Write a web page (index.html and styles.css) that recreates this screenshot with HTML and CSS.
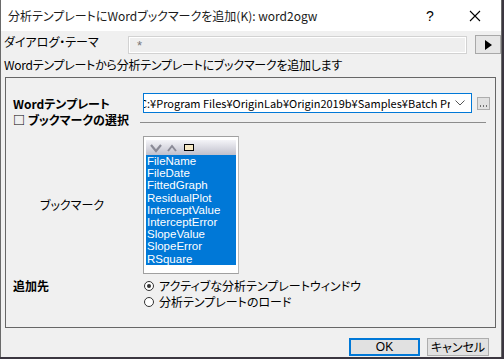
FILE: index.html
```html
<!DOCTYPE html>
<html lang="ja">
<head>
    <meta charset="UTF-8">
    <meta name="viewport" content="width=device-width, initial-scale=1.0">
    <title>分析テンプレートにWordブックマークを追加</title>
    <link rel="stylesheet" href="styles.css">
</head>
<body>
    <div class="dialog">
        <div class="titlebar">
            <span class="title">分析テンプレートにWordブックマークを追加(K): word2ogw</span>
            <span class="help">?</span>
            <span class="close">
                <svg width="12" height="12" viewBox="0 0 12 12"><path d="M1 1 L11 11 M11 1 L1 11" stroke="#000" stroke-width="1.1" fill="none"/></svg>
            </span>
        </div>

        <div class="theme-row">
            <span class="theme-label">ダイアログ・テーマ</span>
            <div class="theme-input">*</div>
            <div class="arrow-btn">
                <svg width="8" height="10" viewBox="0 0 8 10"><path d="M1 0 L8 5 L1 10 Z" fill="#000"/></svg>
            </div>
        </div>

        <div class="desc">Wordテンプレートから分析テンプレートにブックマークを追加します</div>

        <div class="group">
            <div class="row template-row">
                <span class="bold-label">Wordテンプレート</span>
                <div class="combo">
                    <span class="combo-text">C:¥Program Files¥OriginLab¥Origin2019b¥Samples¥Batch Processing</span>
                    <svg class="chevron" width="10" height="6" viewBox="0 0 10 6"><path d="M0.5 0.5 L5 5 L9.5 0.5" stroke="#555" stroke-width="1" fill="none"/></svg>
                </div>
                <div class="dots-btn">
                    <svg width="11" height="11" viewBox="0 0 11 11"><path d="M2 8h1M5 8h1M8 8h1" stroke="#000" stroke-width="1"/></svg>
                </div>
            </div>

            <div class="section-head">
                <span class="section-title">□ ブックマークの選択</span>
            </div>

            <div class="row bookmark-row">
                <span class="plain-label">ブックマーク</span>
                <div class="listbox">
                    <div class="list-head">
                        <svg width="12" height="10" viewBox="0 0 12 10"><path d="M1 2 L6 8 L11 2" stroke="#8a8a96" stroke-width="2.2" fill="none"/></svg>
                        <svg width="12" height="10" viewBox="0 0 12 10"><path d="M2 8 L6 3 L10 8" stroke="#8a8a96" stroke-width="2" fill="none"/></svg>
                        <span class="mini-rect"></span>
                    </div>
                    <ul class="items">
                        <li>FileName</li>
                        <li>FileDate</li>
                        <li>FittedGraph</li>
                        <li>ResidualPlot</li>
                        <li>InterceptValue</li>
                        <li>InterceptError</li>
                        <li>SlopeValue</li>
                        <li>SlopeError</li>
                        <li>RSquare</li>
                    </ul>
                    <div class="list-tail"></div>
                </div>
            </div>

            <div class="row dest-row">
                <span class="bold-label">追加先</span>
                <div class="radios">
                    <div class="radio"><span class="dot checked"></span>アクティブな分析テンプレートウィンドウ</div>
                    <div class="radio"><span class="dot"></span>分析テンプレートのロード</div>
                </div>
            </div>
        </div>

        <div class="footer">
            <div class="btn ok">OK</div>
            <div class="btn">キャンセル</div>
        </div>
    </div>
</body>
</html>
```

FILE: styles.css
```css
body {
    margin: 0;
    background-color: #3b3640;
    font-family: "Noto Sans CJK JP", "Liberation Sans", sans-serif;
    font-size: 12px;
    font-feature-settings: "palt";
    color: #000;
}
.dialog {
    width: 500px;
    height: 357px;
    background-color: #f0f0f0;
    border-left: 1px solid #6a6a6a;
    border-right: 1px solid #6a6a6a;
    display: flex;
    flex-direction: column;
}

/* title bar */
.titlebar {
    height: 31px;
    background-color: #fff;
    display: flex;
    align-items: center;
    padding-left: 7px;
}
.title {
    flex: 1;
    font-size: 12px;
    color: #1a1a1a;
}
.help {
    width: 30px;
    font-family: "Liberation Sans", sans-serif;
    font-size: 14px;
    text-align: center;
    margin-right: 20px;
}
.close {
    width: 20px;
    margin-right: 16px;
    display: flex;
    justify-content: center;
}

/* theme row */
.theme-row {
    display: flex;
    align-items: center;
    height: 22px;
    margin-top: 3px;
    padding-left: 3px;
}
.theme-label {
    width: 124px;
    line-height: 14px;
    margin-top: -6px;
}
.theme-input {
    width: 329px;
    height: 15px;
    border: 1px solid #d2d2d2;
    outline: 1px solid #fff;
    outline-offset: -2px;
    background-color: #eeeeee;
    padding: 1px 0 0 8px;
    color: #777;
    font-family: "Liberation Sans", sans-serif;
    font-size: 13px;
    line-height: 15px;
    margin-top: -1px;
}
.arrow-btn {
    width: 24px;
    height: 17px;
    margin-left: 8px;
    border: 1px solid #a8a8a8;
    background-color: #e6e6e6;
    display: flex;
    align-items: center;
    justify-content: center;
    margin-top: -1px;
}

.desc {
    padding-left: 3px;
    height: 19px;
    line-height: 18px;
    letter-spacing: -0.25px;
}

/* group box */
.group {
    margin: 2px 0 0 4px;
    width: 491px;
    height: 251px;
    border: 1px solid #666;
    box-sizing: border-box;
    padding: 14px 0 0 7px;
}
.row {
    display: flex;
}
.bold-label {
    font-weight: bold;
}
.template-row {
    align-items: center;
    height: 22px;
}
.template-row .bold-label {
    width: 130px;
}
.combo {
    width: 327px;
    height: 18px;
    border: 1px solid #0078d7;
    background-color: #fff;
    display: flex;
    align-items: center;
    overflow: hidden;
}
.combo-text {
    flex: 1;
    white-space: nowrap;
    overflow: hidden;
    font-size: 11px;
    text-indent: -4px;
}
.chevron {
    margin: 0 6px 0 5px;
}
.dots-btn {
    width: 11px;
    height: 11px;
    margin-left: 5px;
    border: 1px solid #adadad;
    background-color: #e1e1e1;
    display: flex;
}

/* section title with separator line */
.section-head {
    height: 16px;
    line-height: 16px;
    margin-top: -2px;
    width: 473px;
    background: linear-gradient(#8c8c8c, #8c8c8c) no-repeat 127px 10px / 346px 1px;
}
.section-title {
    font-weight: bold;
    white-space: nowrap;
}

/* list box */
.bookmark-row {
    align-items: center;
    margin-top: 8px;
}
.plain-label {
    width: 103px;
    padding-left: 27px;
}
.listbox {
    width: 90px;
    border: 1px solid #a0a0a0;
    border-right-color: #b8b8b8;
    background-color: #fff;
    padding: 3px 2px 0 2px;
}
.list-head {
    height: 15px;
    background: linear-gradient(#f4f4f8, #c0c0cc);
    display: flex;
    align-items: center;
    gap: 4px;
    padding-left: 4px;
}
.mini-rect {
    width: 8px;
    height: 5px;
    border: 1px solid #000;
    background-color: #f6e8c4;
    margin-left: 2px;
}
.items {
    list-style: none;
    margin: 0;
    padding: 0 0 0 1px;
    background-color: #0078d7;
    color: #fff;
    font-family: "Liberation Sans", sans-serif;
    font-size: 11.5px;
}
.items li {
    height: 12.2px;
    line-height: 12px;
}
.list-tail {
    height: 8px;
}

/* destination */
.dest-row {
    margin-top: 4px;
}
.dest-row .bold-label {
    width: 130px;
    line-height: 16px;
}
.radio {
    display: flex;
    align-items: center;
    height: 16px;
}
.dot {
    width: 10px;
    height: 10px;
    border: 1px solid #333;
    border-radius: 50%;
    background-color: #fff;
    margin: 0 5px 0 1px;
    box-sizing: border-box;
    position: relative;
}
.dot.checked::after {
    content: "";
    position: absolute;
    left: 2px;
    top: 2px;
    width: 4px;
    height: 4px;
    border-radius: 50%;
    background-color: #333;
}

/* buttons */
.footer {
    display: flex;
    justify-content: flex-end;
    gap: 7px;
    padding: 10px 12px 0 0;
}
.btn {
    width: 60px;
    height: 16px;
    border: 1px solid #adadad;
    background-color: #e1e1e1;
    text-align: center;
    line-height: 16px;
}
.btn.ok {
    width: 67px;
    border: 2px solid #0078d7;
    height: 14px;
    line-height: 14px;
    font-family: "Liberation Sans", sans-serif;
}
```
